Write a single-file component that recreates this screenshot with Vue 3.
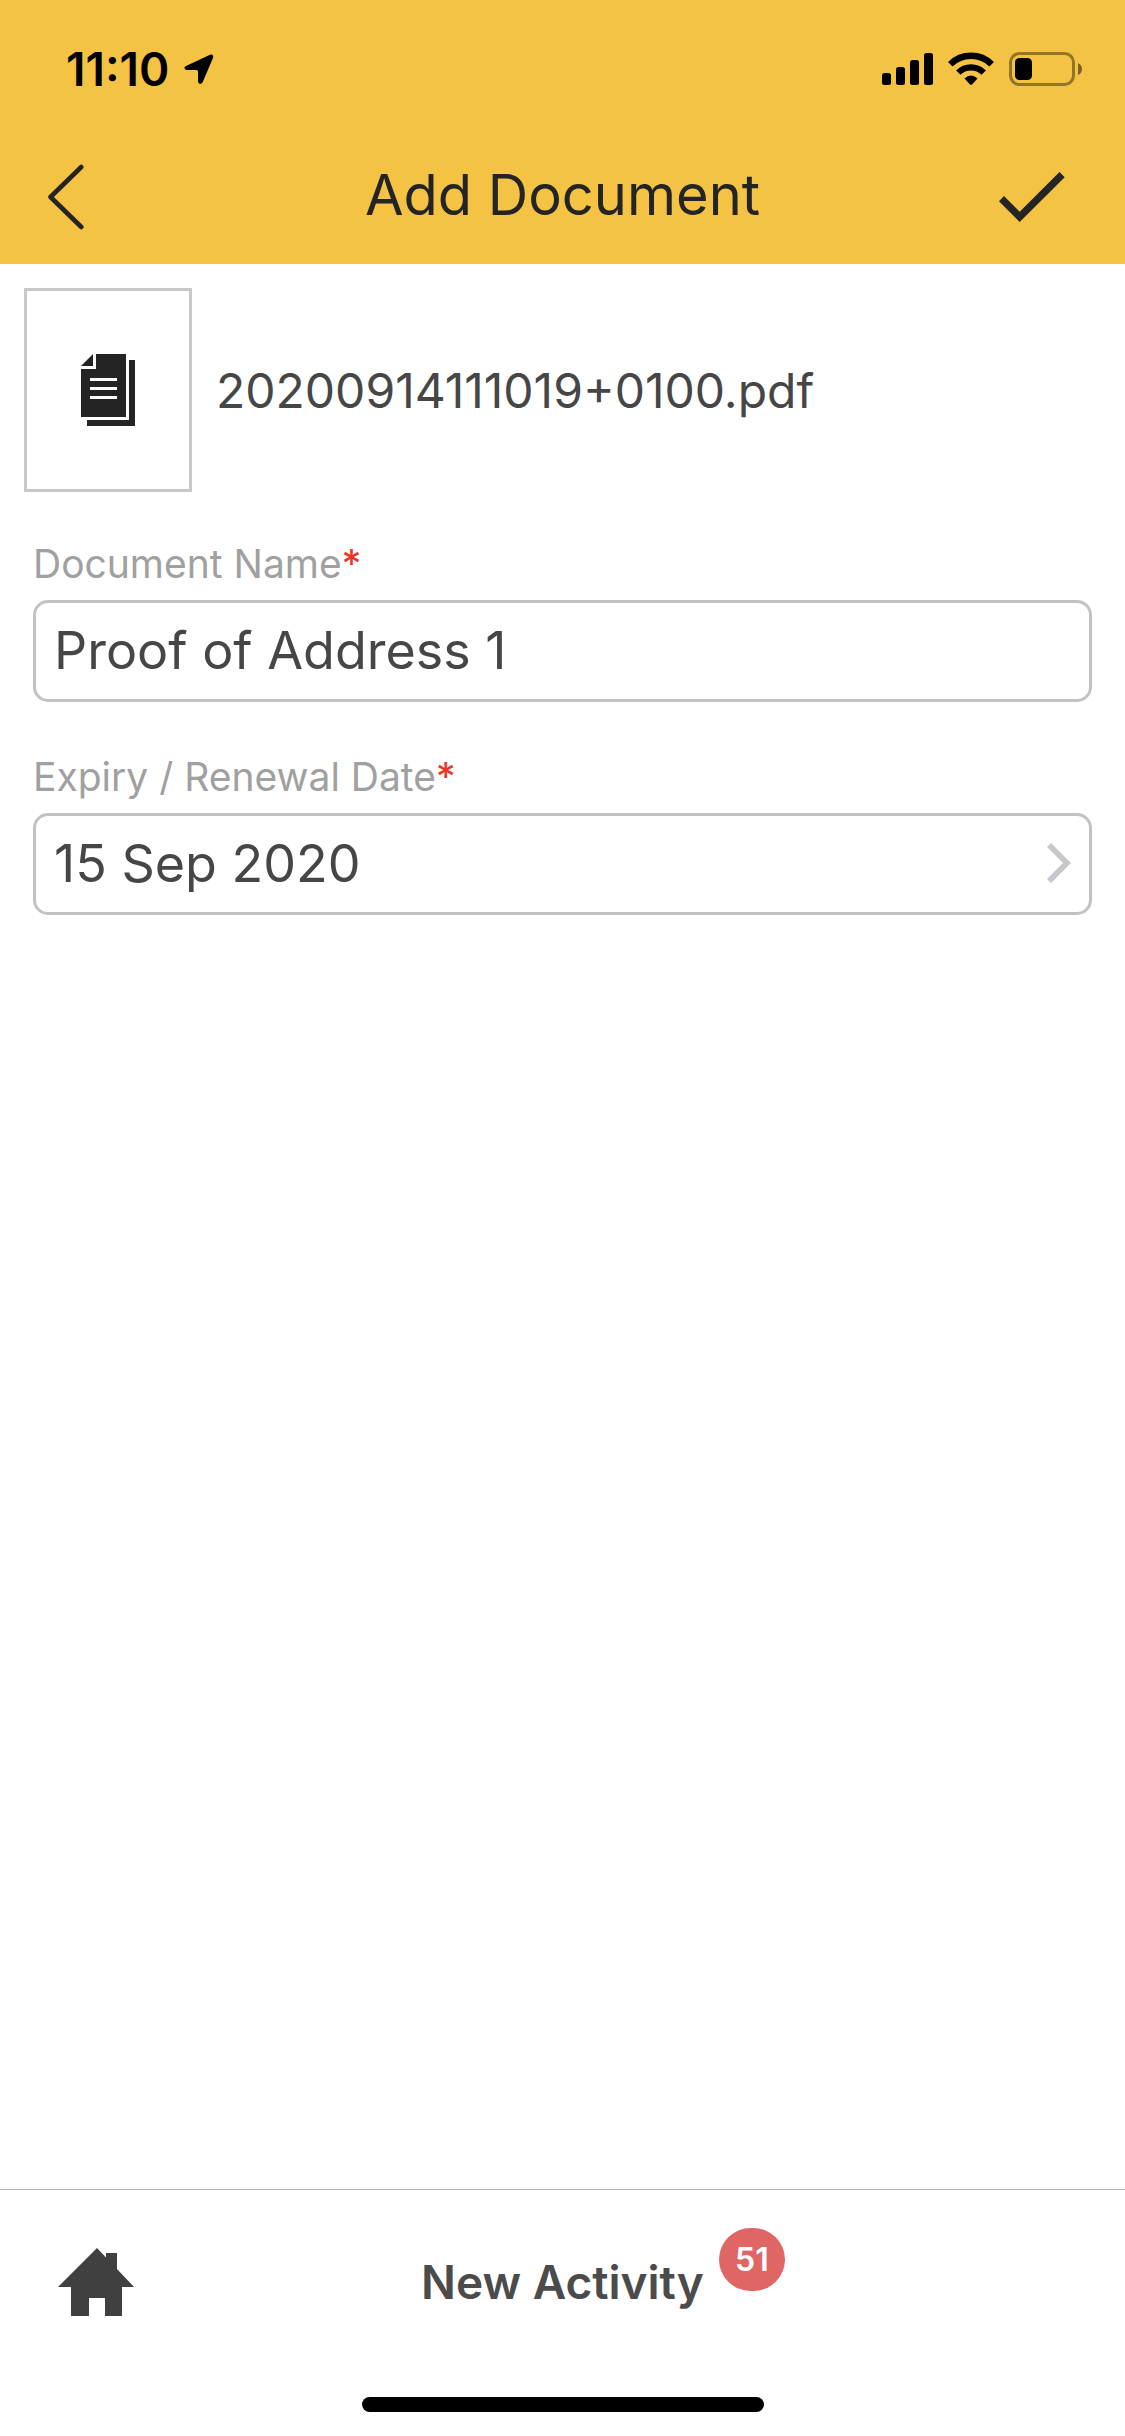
<script setup>
import { ref } from 'vue'

const fileName = '20200914111019+0100.pdf'
const documentName = ref('Proof of Address 1')
const expiryDate = ref('15 Sep 2020')
const activityCount = ref(51)
</script>

<template>
  <div class="screen">
    <header class="header">
      <div class="status">
        <div class="status-side">
          <span class="time">11:10</span>
          <svg width="30" height="31" viewBox="0 0 30 31" aria-hidden="true">
            <path d="M2 12 26 .7Q30 -.3 29 4L18.500 28.500Q16 31.500 14 28V17.500Q14 16 12.500 16H2.500Q-1.500 14.500 2 12Z" />
          </svg>
        </div>
        <div class="status-side">
          <svg width="51" height="34" viewBox="0 0 51 34" aria-hidden="true">
            <rect x="0" y="21" width="9" height="12" rx="2.500" />
            <rect x="14" y="15" width="9" height="18" rx="2.500" />
            <rect x="28" y="8" width="9" height="25" rx="2.500" />
            <rect x="42" y="1" width="9" height="32" rx="2.500" />
          </svg>
          <svg width="46" height="34" viewBox="0 0 46 34" aria-hidden="true">
            <g fill="none" stroke="#000">
              <path d="M2.300 12.300A29.500 29.500 0 0 1 43.700 12.300" stroke-width="6.500" />
              <path d="M10.300 20.600A18 18 0 0 1 35.700 20.600" stroke-width="6.200" />
            </g>
            <path d="M16.500 26.500Q23 20.500 29.500 26.500L24 32.400Q23 33.300 22 32.400Z" />
          </svg>
          <svg width="74" height="34" viewBox="0 0 74 34" aria-hidden="true">
            <rect x="1.500" y="1.500" width="63" height="31" rx="9" fill="none" stroke="#000" stroke-opacity=".4" stroke-width="3" />
            <rect x="6" y="6" width="17" height="22" rx="4.500" />
            <path d="M69 11Q73 13 73 17T69 23Z" fill-opacity=".5" />
          </svg>
        </div>
      </div>
      <nav class="nav">
        <button class="icon-button" type="button" aria-label="Back">
          <svg width="36" height="66" viewBox="0 0 36 66" aria-hidden="true">
            <path d="M33.300 3 2.500 33 33.300 63" fill="none" stroke="#242424" stroke-width="4.600" stroke-linecap="round" stroke-linejoin="round" />
          </svg>
        </button>
        <h1 class="title">Add Document</h1>
        <button class="icon-button confirm" type="button" aria-label="Save">
          <svg width="66" height="50" viewBox="0 0 66 50" aria-hidden="true">
            <path d="M0 29.300 5 24 20.700 39.700 60.500 0 65.700 5.200 20.700 50Z" fill="#242424" />
          </svg>
        </button>
      </nav>
    </header>

    <main class="content">
      <section class="file">
        <div class="thumb">
          <svg width="54" height="72" viewBox="0 0 54 72" fill="#242424" aria-hidden="true">
            <path d="M12 0V12H0Z" />
            <path d="M15 0H45V63H0V15H15Z" />
            <path d="M48 6H54V72H6V66H48Z" />
            <path d="M9 24H36V27H9ZM9 33H36V36H9ZM9 42H36V45H9Z" fill="#fff" />
          </svg>
        </div>
        <span class="file-name">{{ fileName }}</span>
      </section>

      <form class="form" @submit.prevent>
        <div class="group">
          <label class="label" for="document-name">Document Name<span class="required">*</span></label>
          <input id="document-name" v-model="documentName" class="field" type="text" required />
        </div>
        <div class="group">
          <label class="label" for="expiry-date">Expiry / Renewal Date<span class="required">*</span></label>
          <button id="expiry-date" class="field picker" type="button">
            <span>{{ expiryDate }}</span>
            <svg width="24" height="40" viewBox="0 0 24 40" aria-hidden="true">
              <path d="M4 0 24 20 4 40 0 36 16 20 0 4Z" fill="#c7c7cc" />
            </svg>
          </button>
        </div>
      </form>
    </main>

    <footer class="footer">
      <div class="tabs">
        <button class="icon-button" type="button" aria-label="Home">
          <svg width="76" height="68" viewBox="0 0 76 68" aria-hidden="true">
            <path d="M39 0 48 9.500V5H59V21L76 39H64V68H47V50H31V68H13V39H0Z" fill="#404040" />
          </svg>
        </button>
        <button class="activity" type="button">
          New Activity
          <span class="badge">{{ activityCount }}</span>
        </button>
      </div>
      <div class="home-indicator"></div>
    </footer>
  </div>
</template>

<style>
body {
  margin: 0;
  background: #fff;
}
</style>

<style scoped>
.screen {
  display: flex;
  flex-direction: column;
  min-height: 100vh;
  font-family: Inter, "Liberation Sans", sans-serif;
  color: #464646;
}

svg {
  display: block;
  flex: none;
}

button {
  margin: 0;
  padding: 0;
  border: 0;
  background: none;
  font: inherit;
  color: inherit;
}

.header {
  background: #f4c344;
  color: #242424;
}

.status {
  display: flex;
  align-items: center;
  justify-content: space-between;
  height: 138px;
  padding: 0 42px 0 66px;
  color: #000;
}

.status-side {
  display: flex;
  align-items: center;
  gap: 15px;
}

.time {
  font-size: 46px;
  font-weight: 600;
}

.nav {
  display: grid;
  grid-template-columns: 1fr auto 1fr;
  align-items: center;
  box-sizing: border-box;
  height: 126px;
  padding: 0 48px 8px;
}

.icon-button {
  justify-self: start;
}

.confirm {
  justify-self: end;
  margin-right: 12px;
}

.title {
  margin: 0;
  padding-bottom: 4px;
  font-size: 56px;
  font-weight: 400;
}

.content {
  flex: 1;
}

.file {
  display: flex;
  align-items: center;
  gap: 24px;
  padding: 24px;
}

.thumb {
  display: flex;
  align-items: center;
  justify-content: center;
  box-sizing: border-box;
  width: 168px;
  height: 204px;
  border: 3px solid #c8c8c8;
}

.file-name {
  font-size: 48px;
}

.form {
  display: flex;
  flex-direction: column;
  gap: 51px;
  padding: 24px 33px;
}

.group {
  display: flex;
  flex-direction: column;
  gap: 12px;
}

.label {
  font-size: 39px;
  line-height: 48px;
  color: #a0a0a0;
}

.required {
  color: #ec3323;
}

.field {
  box-sizing: border-box;
  width: 100%;
  height: 102px;
  margin: 0;
  padding: 0 18px 2px;
  border: 3px solid #c2c2c2;
  border-radius: 15px;
  background: #fff;
  font-family: inherit;
  font-size: 52px;
  color: #464646;
}

.picker {
  display: flex;
  align-items: center;
  justify-content: space-between;
}

.footer {
  border-top: 1px solid #b2b2b2;
}

.tabs {
  display: grid;
  grid-template-columns: 1fr auto 1fr;
  align-items: center;
  height: 184px;
  padding: 0 58px;
}

.activity {
  position: relative;
  font-size: 46px;
  font-weight: 600;
  line-height: 58px;
  color: #4b4b4b;
}

.badge {
  position: absolute;
  top: -25px;
  left: calc(100% + 15px);
  width: 66px;
  border-radius: 32px;
  background: #e06666;
  font-size: 32px;
  font-weight: 600;
  line-height: 63px;
  text-align: center;
  color: #fff;
}

.home-indicator {
  width: 402px;
  height: 15px;
  margin: 23px auto 24px;
  border-radius: 8px;
  background: #000;
}
</style>
